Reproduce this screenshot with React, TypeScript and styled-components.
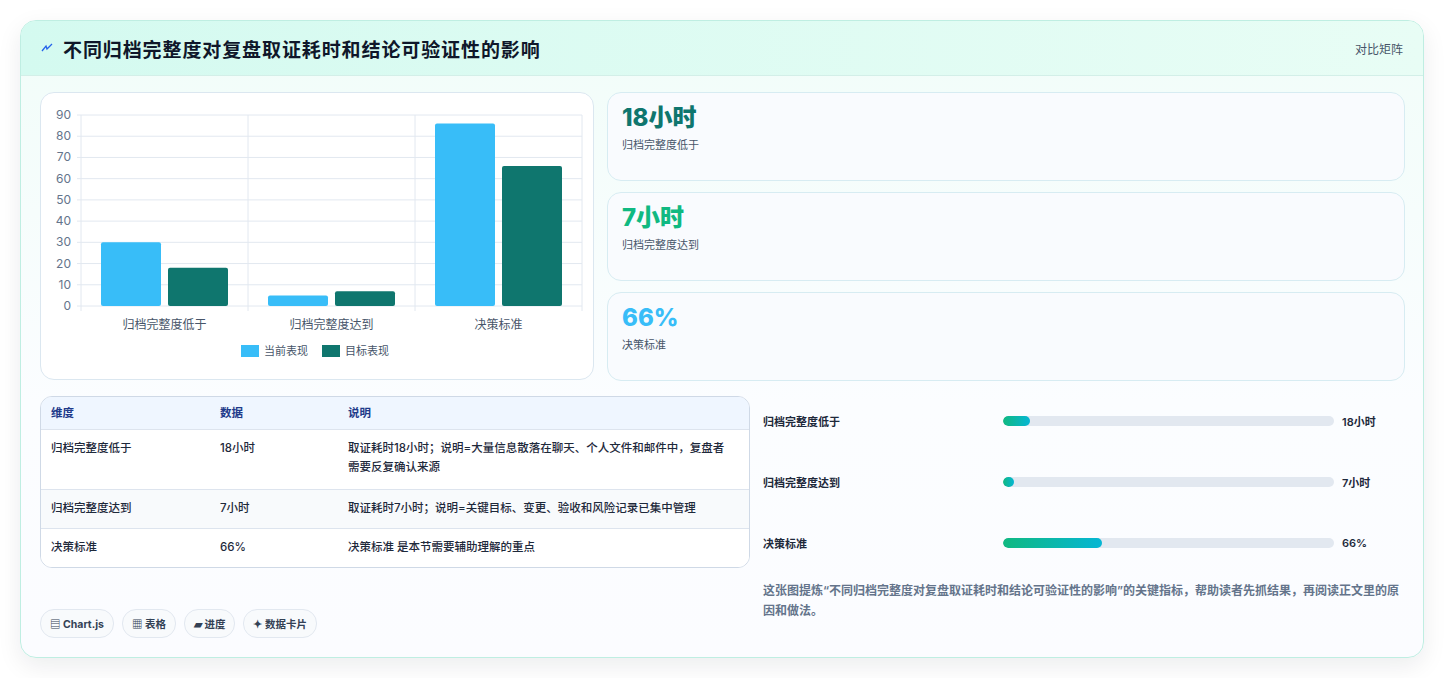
import React from 'react';
import styled, { createGlobalStyle } from 'styled-components';

const Global = createGlobalStyle`
  body { margin: 0; background: #fff; font-family: Inter, "Noto Sans CJK SC", sans-serif; color: #0f172a; }
`;

const Page = styled.div`
  padding: 20px 20px 20px 20px;
  height: 678px;
  box-sizing: border-box;
`;

const Card = styled.div`
  border: 1px solid #bfeee2;
  border-radius: 16px;
  overflow: hidden;
  height: 638px;
  box-sizing: border-box;
  background: linear-gradient(180deg, #f1fdf9 0%, #fbfdff 60%, #fbfcff 100%);
  box-shadow: 0 8px 24px rgba(15, 23, 42, 0.08);
`;

const Header = styled.div`
  height: 54px;
  display: flex;
  align-items: center;
  justify-content: space-between;
  padding: 0 20px;
  background: linear-gradient(90deg, #d4faf0, #e8fdf5);
  border-bottom: 1px solid #d3efe8;
`;

const Title = styled.h1`
  margin: 0;
  font-size: 19px;
  letter-spacing: 0.9px;
  font-weight: 700;
  display: flex;
  align-items: center;
  gap: 10px;
  color: #0f172a;
`;

const Mode = styled.span`
  font-size: 12px;
  color: #475569;
`;

const Body = styled.div`
  padding: 16px 18px 0 19px;
  display: grid;
  grid-template-columns: 554px 1fr;
  column-gap: 13px;
`;

const Panel = styled.div`
  background: #fff;
  border: 1px solid #dbe7f0;
  border-radius: 14px;
  height: 288px;
  box-sizing: border-box;
`;

const Stats = styled.div`
  display: flex;
  flex-direction: column;
  gap: 11px;
`;

const Stat = styled.div`
  height: 89px;
  box-sizing: border-box;
  border: 1px solid #d7ecf2;
  border-radius: 14px;
  background: #f9fbfe;
  padding: 10px 14px;
`;

const StatValue = styled.div<{ $c: string }>`
  font-size: 24px;
  font-weight: 800;
  color: ${p => p.$c};
  line-height: 30px;
`;

const StatLabel = styled.div`
  font-size: 11px;
  color: #475569;
  margin-top: 3px;
`;

const Lower = styled.div`
  grid-column: 1 / 3;
  display: grid;
  grid-template-columns: 710px 1fr;
  column-gap: 13px;
  margin-top: 15px;
`;

const Table = styled.div`
  border: 1px solid #cfd9e6;
  border-radius: 12px;
  overflow: hidden;
  background: #fff;
  height: 172px;
  box-sizing: border-box;
`;

const Row = styled.div<{ $head?: boolean; $h: number; $alt?: boolean }>`
  display: grid;
  grid-template-columns: 169px 128px 1fr;
  height: ${p => p.$h}px;
  padding: ${p => (p.$head ? '0' : '9px')} 14px 0 10px;
  box-sizing: border-box;
  align-items: ${p => (p.$head ? 'center' : 'start')};
  background: ${p => (p.$head ? '#eff6ff' : p.$alt ? '#f8fafc' : '#fff')};
  border-bottom: 1px solid #dde4ee;
  font-size: 11.5px;
  font-weight: ${p => (p.$head ? 700 : 500)};
  color: ${p => (p.$head ? '#1e3a8a' : '#1e293b')};
  line-height: 19px;
  &:last-child { border-bottom: none; }
`;

const Chips = styled.div`
  display: flex;
  gap: 8px;
  margin-top: 41px;
`;

const Chip = styled.span`
  font-size: 10.5px;
  font-weight: 700;
  color: #334155;
  border: 1px solid #e2e8f0;
  background: #f8fafc;
  border-radius: 14px;
  padding: 6px 9px;
`;

const Bars = styled.div`
  display: flex;
  flex-direction: column;
  padding-top: 17px;
`;

const BarRow = styled.div`
  display: grid;
  grid-template-columns: 232px 331px 1fr;
  column-gap: 8px;
  align-items: center;
  height: 61px;
  align-content: start;
  font-size: 11px;
  font-weight: 600;
  color: #1e293b;
`;

const Track = styled.div`
  height: 10px;
  border-radius: 5px;
  background: #e2e8f0;
  overflow: hidden;
`;

const Fill = styled.div`
  height: 100%;
  border-radius: 5px;
  background: linear-gradient(90deg, #10b981, #06b6d4);
`;

const Note = styled.p`
  margin: 0;
  margin-top: -15px;
  max-width: 640px;
  font-size: 12px;
  font-weight: 600;
  line-height: 20px;
  color: #64748b;
`;

function Chart() {
  const x0 = 40, top = 22, bottom = 213, w = 501;
  const y = (v: number) => bottom - (v / 90) * (bottom - top);
  const cats = ['归档完整度低于', '归档完整度达到', '决策标准'];
  const data = [[30, 18], [5, 7], [86, 66]];
  const cw = w / 3;
  return (
    <svg width="554" height="288" style={{ display: 'block' }} fontFamily="Inter, 'Noto Sans CJK SC', sans-serif">
      {[0, 10, 20, 30, 40, 50, 60, 70, 80, 90].map(v => (
        <g key={v}>
          <line x1={x0 - 4} x2={x0 + w} y1={y(v)} y2={y(v)} stroke="#e2e8f0" />
          <text x={x0 - 10} y={y(v) + 4} fontSize="12" fill="#64748b" textAnchor="end">{v}</text>
        </g>
      ))}
      {[0, 1, 2, 3].map(i => (
        <line key={i} x1={x0 + i * cw} x2={x0 + i * cw} y1={top} y2={bottom + 5} stroke="#e2e8f0" />
      ))}
      {data.map((d, i) => (
        <g key={i}>
          <rect x={x0 + i * cw + 20} y={y(d[0])} width={60} height={bottom - y(d[0])} rx="2" fill="#38bdf8" />
          <rect x={x0 + i * cw + 87} y={y(d[1])} width={60} height={bottom - y(d[1])} rx="2" fill="#0f766e" />
          <text x={x0 + i * cw + cw / 2} y={236} fontSize="12" fill="#475569" textAnchor="middle">{cats[i]}</text>
        </g>
      ))}
      <rect x="200" y="252" width="18" height="12" fill="#38bdf8" />
      <text x="223" y="262" fontSize="11" fill="#475569">当前表现</text>
      <rect x="281" y="252" width="18" height="12" fill="#0f766e" />
      <text x="304" y="262" fontSize="11" fill="#475569">目标表现</text>
    </svg>
  );
}

const rows = [
  ['归档完整度低于', '18小时', '取证耗时18小时；说明=大量信息散落在聊天、个人文件和邮件中，复盘者需要反复确认来源', 60],
  ['归档完整度达到', '7小时', '取证耗时7小时；说明=关键目标、变更、验收和风险记录已集中管理', 39],
  ['决策标准', '66%', '决策标准 是本节需要辅助理解的重点', 40],
] as const;

const bars = [
  ['归档完整度低于', 8.3, '18小时'],
  ['归档完整度达到', 3.4, '7小时'],
  ['决策标准', 30, '66%'],
] as const;

export default function App() {
  return (
    <Page>
      <Global />
      <Card>
        <Header>
          <Title>
            <svg width="12" height="10" viewBox="0 0 12 10"><path d="M1 8 L5 3 L6 6 L11 1" stroke="#2563eb" strokeWidth="1.3" fill="none" /></svg>
            不同归档完整度对复盘取证耗时和结论可验证性的影响
          </Title>
          <Mode>对比矩阵</Mode>
        </Header>
        <Body>
          <Panel><Chart /></Panel>
          <Stats>
            <Stat><StatValue $c="#0f766e">18小时</StatValue><StatLabel>归档完整度低于</StatLabel></Stat>
            <Stat><StatValue $c="#10b981">7小时</StatValue><StatLabel>归档完整度达到</StatLabel></Stat>
            <Stat><StatValue $c="#38bdf8">66%</StatValue><StatLabel>决策标准</StatLabel></Stat>
          </Stats>
          <Lower>
            <div>
              <Table>
                <Row $head $h={33}><span>维度</span><span>数据</span><span>说明</span></Row>
                {rows.map((r, i) => (
                  <Row key={i} $h={r[3]} $alt={i === 1}><span>{r[0]}</span><span>{r[1]}</span><span>{r[2]}</span></Row>
                ))}
              </Table>
              <Chips>
                <Chip>▤ Chart.js</Chip>
                <Chip>▦ 表格</Chip>
                <Chip>▰ 进度</Chip>
                <Chip>✦ 数据卡片</Chip>
              </Chips>
            </div>
            <Bars>
              {bars.map((b, i) => (
                <BarRow key={i}>
                  <span>{b[0]}</span>
                  <Track><Fill style={{ width: `${b[1]}%` }} /></Track>
                  <span>{b[2]}</span>
                </BarRow>
              ))}
              <Note>这张图提炼“不同归档完整度对复盘取证耗时和结论可验证性的影响”的关键指标，帮助读者先抓结果，再阅读正文里的原因和做法。</Note>
            </Bars>
          </Lower>
        </Body>
      </Card>
    </Page>
  );
}
